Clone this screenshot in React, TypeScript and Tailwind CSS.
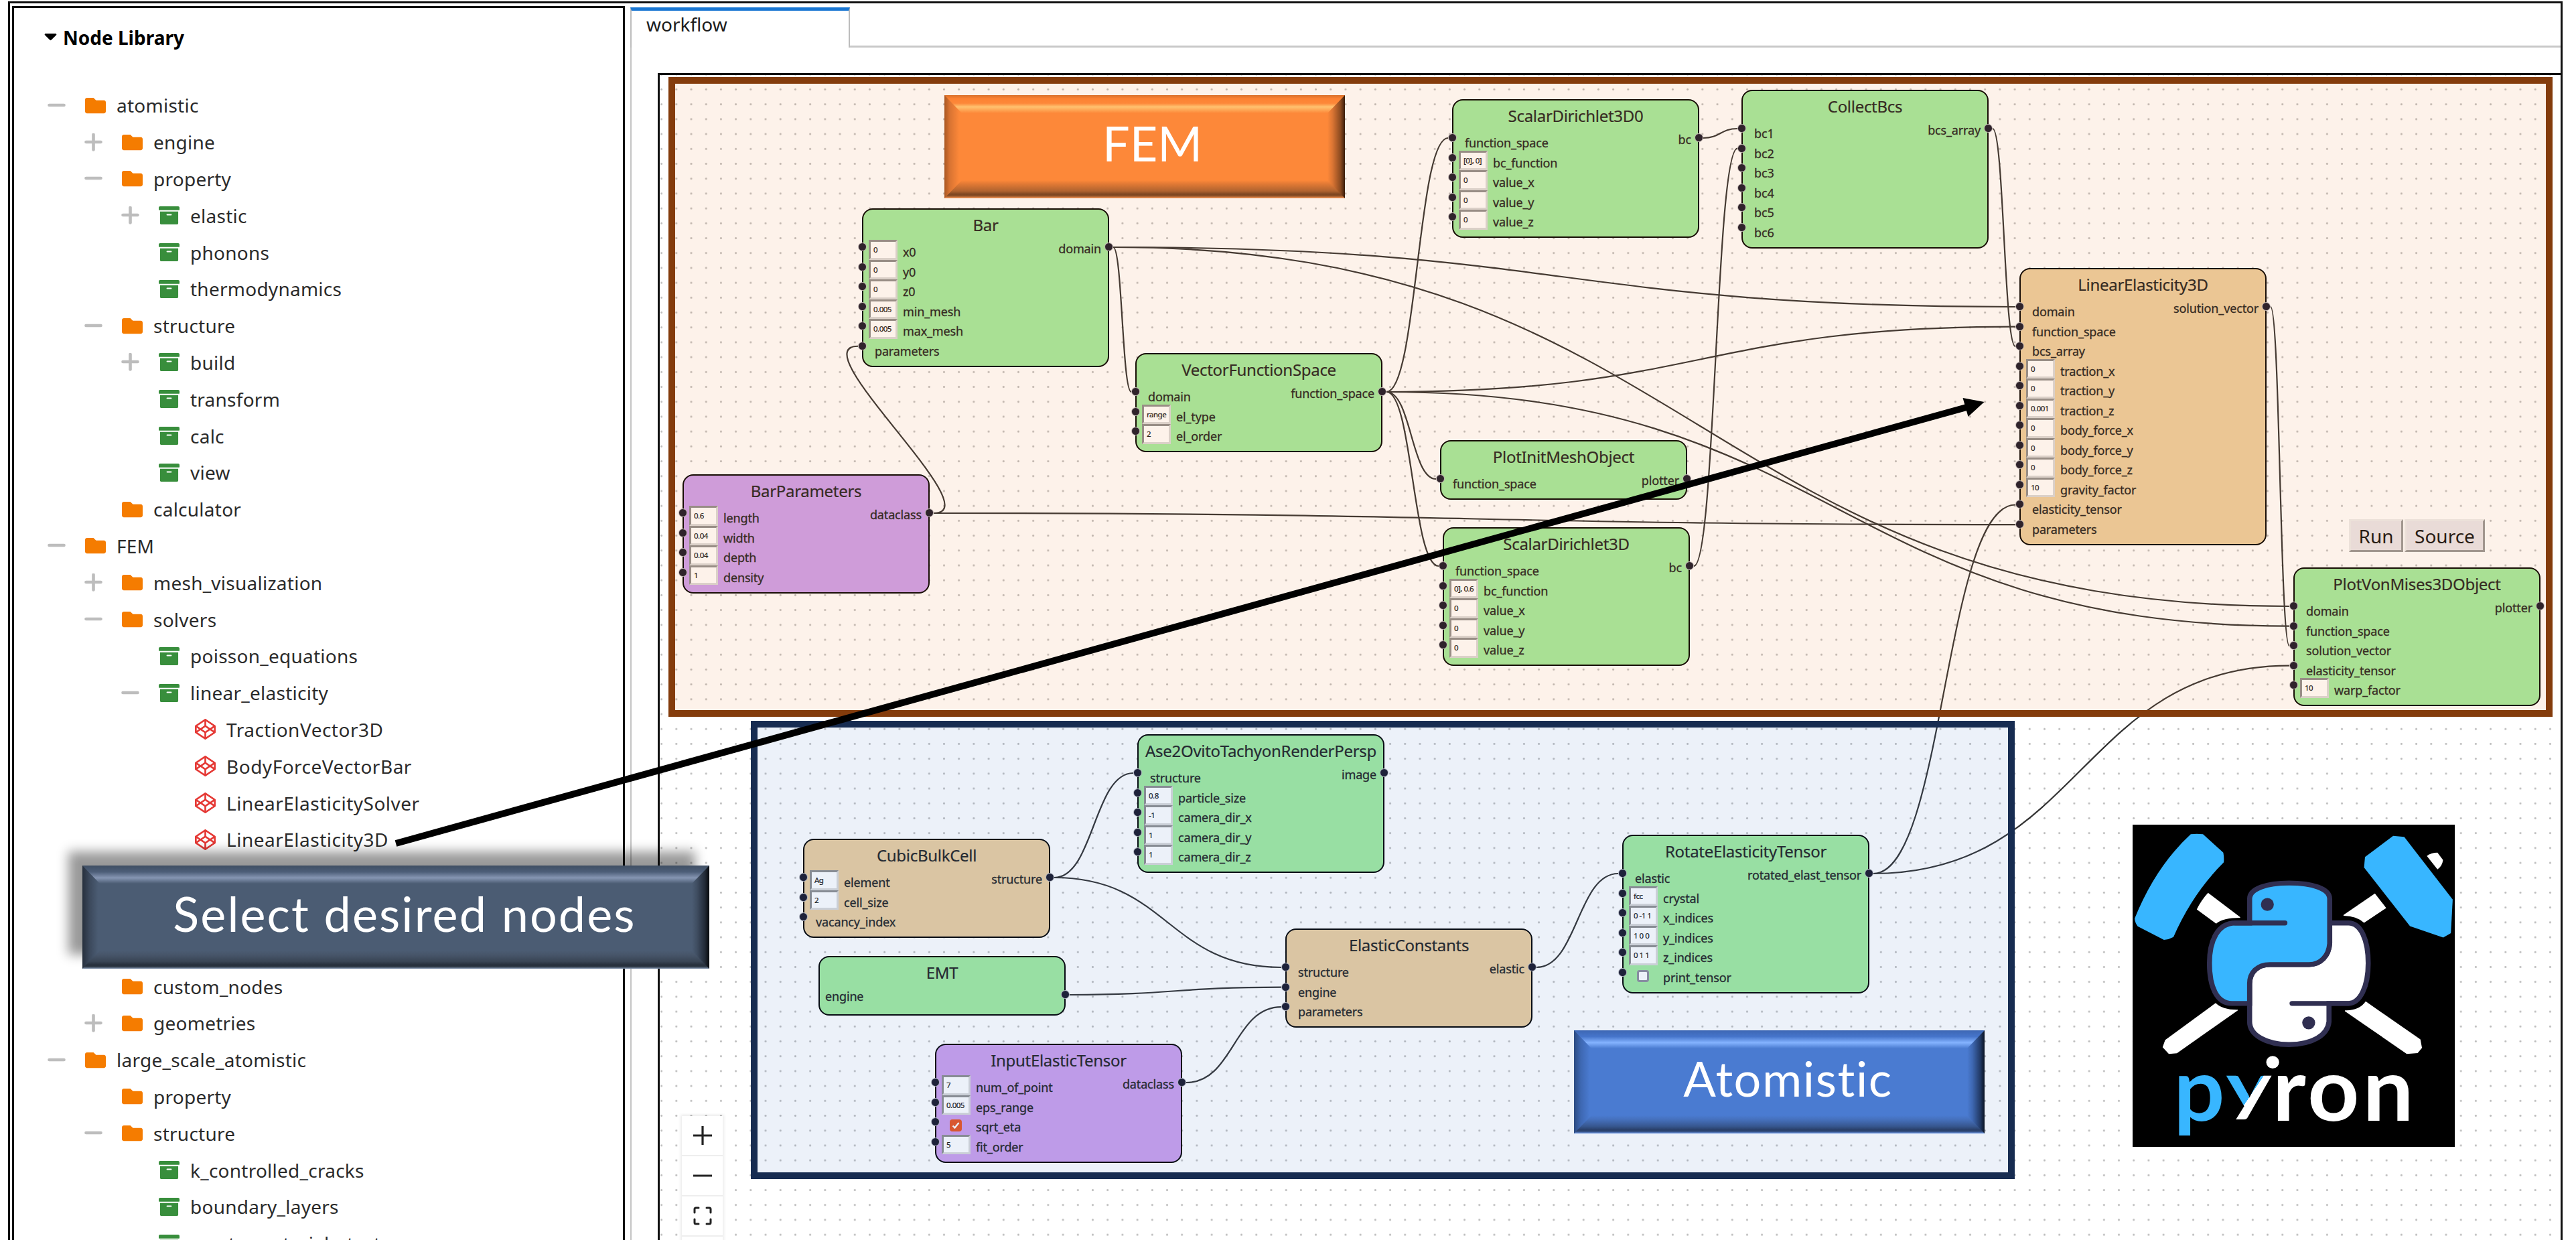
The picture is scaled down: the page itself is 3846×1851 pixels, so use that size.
import React from "react";
import { FaFolder, FaArchive, FaCodepen } from "react-icons/fa";

/* ---------- node library tree ---------- */

type Kind = "folder" | "archive" | "node";
type Toggle = "+" | "-" | "";
type TreeRow = [level: number, toggle: Toggle, kind: Kind, label: string];

const tree: TreeRow[] = [
  [0, "-", "folder", "atomistic"],
  [1, "+", "folder", "engine"],
  [1, "-", "folder", "property"],
  [2, "+", "archive", "elastic"],
  [2, "", "archive", "phonons"],
  [2, "", "archive", "thermodynamics"],
  [1, "-", "folder", "structure"],
  [2, "+", "archive", "build"],
  [2, "", "archive", "transform"],
  [2, "", "archive", "calc"],
  [2, "", "archive", "view"],
  [1, "", "folder", "calculator"],
  [0, "-", "folder", "FEM"],
  [1, "+", "folder", "mesh_visualization"],
  [1, "-", "folder", "solvers"],
  [2, "", "archive", "poisson_equations"],
  [2, "-", "archive", "linear_elasticity"],
  [3, "", "node", "TractionVector3D"],
  [3, "", "node", "BodyForceVectorBar"],
  [3, "", "node", "LinearElasticitySolver"],
  [3, "", "node", "LinearElasticity3D"],
  [3, "", "node", ""],
  [3, "", "node", ""],
  [3, "", "node", ""],
  [1, "", "folder", "custom_nodes"],
  [1, "+", "folder", "geometries"],
  [0, "-", "folder", "large_scale_atomistic"],
  [1, "", "folder", "property"],
  [1, "-", "folder", "structure"],
  [2, "", "archive", "k_controlled_cracks"],
  [2, "", "archive", "boundary_layers"],
  [2, "", "archive", "create_materials_test"],
];

const indent = ["pl-[50px]", "pl-[105px]", "pl-[160px]", "pl-[214px]"];

function ToggleIcon({ kind }: { kind: Toggle }) {
  return (
    <svg viewBox="0 0 27 27" className="h-[27px] w-[27px] shrink-0" stroke="#bdbdbd" strokeWidth="4.6" strokeLinecap="round">
      {kind !== "" && <path d="M2.5 13H24.5" />}
      {kind === "+" && <path d="M13.5 2V24.5" />}
    </svg>
  );
}

function TreeItem({ row }: { row: TreeRow }) {
  const [level, toggle, kind, label] = row;
  return (
    <div className={`flex h-[54.8px] items-center ${indent[level]}`}>
      <ToggleIcon kind={toggle} />
      <div className="ml-[28px] flex w-[32px] justify-center text-[31px]">
        {kind === "folder" && <FaFolder className="text-[#f57c00]" />}
        {kind === "archive" && <FaArchive className="text-[#388e3c]" />}
        {kind === "node" && <FaCodepen className="text-[#e53935]" />}
      </div>
      <span
        className={`ml-[16px] whitespace-nowrap text-[28px] leading-[54px] text-[#2b2b2b] ${
          kind === "node" ? "tracking-[0.5px]" : "tracking-[0.25px]"
        }`}
      >
        {label}
      </span>
    </div>
  );
}

/* ---------- workflow nodes ---------- */

type Row = { label: string; value?: string; check?: boolean; noPort?: boolean };
type NodeDef = {
  id: string;
  x: number;
  y: number;
  title: string;
  color: string;
  rows: Row[];
  out: string;
  outPlain?: boolean;
};

const GREEN = "bg-[#a2eba0]";
const LILAC = "bg-[#cca0ec]";
const SAND = "bg-[#ebcfa0]";

const WIDTH = 369;
const PITCH = 29.55;
const PORT = 58;

const nodes: NodeDef[] = [
  {
    id: "bar", x: 1287, y: 311, title: "Bar", color: GREEN, out: "domain",
    rows: [
      { label: "x0", value: "0" }, { label: "y0", value: "0" }, { label: "z0", value: "0" },
      { label: "min_mesh", value: "0.005" }, { label: "max_mesh", value: "0.005" }, { label: "parameters" },
    ],
  },
  {
    id: "barp", x: 1019, y: 708, title: "BarParameters", color: LILAC, out: "dataclass",
    rows: [
      { label: "length", value: "0.6" }, { label: "width", value: "0.04" },
      { label: "depth", value: "0.04" }, { label: "density", value: "1" },
    ],
  },
  {
    id: "vfs", x: 1695, y: 527, title: "VectorFunctionSpace", color: GREEN, out: "function_space",
    rows: [{ label: "domain" }, { label: "el_type", value: "range" }, { label: "el_order", value: "2" }],
  },
  {
    id: "sd0", x: 2168, y: 148, title: "ScalarDirichlet3D0", color: GREEN, out: "bc",
    rows: [
      { label: "function_space" }, { label: "bc_function", value: "[0], 0]" },
      { label: "value_x", value: "0" }, { label: "value_y", value: "0" }, { label: "value_z", value: "0" },
    ],
  },
  {
    id: "cbc", x: 2600, y: 134, title: "CollectBcs", color: GREEN, out: "bcs_array",
    rows: [{ label: "bc1" }, { label: "bc2" }, { label: "bc3" }, { label: "bc4" }, { label: "bc5" }, { label: "bc6" }],
  },
  {
    id: "pim", x: 2150, y: 657, title: "PlotInitMeshObject", color: GREEN, out: "plotter",
    rows: [{ label: "function_space" }],
  },
  {
    id: "sd", x: 2154, y: 787, title: "ScalarDirichlet3D", color: GREEN, out: "bc",
    rows: [
      { label: "function_space" }, { label: "bc_function", value: "0], 0.6" },
      { label: "value_x", value: "0" }, { label: "value_y", value: "0" }, { label: "value_z", value: "0" },
    ],
  },
  {
    id: "le", x: 3015, y: 400, title: "LinearElasticity3D", color: SAND, out: "solution_vector",
    rows: [
      { label: "domain" }, { label: "function_space" }, { label: "bcs_array" },
      { label: "traction_x", value: "0" }, { label: "traction_y", value: "0" }, { label: "traction_z", value: "0.001" },
      { label: "body_force_x", value: "0" }, { label: "body_force_y", value: "0" }, { label: "body_force_z", value: "0" },
      { label: "gravity_factor", value: "10" }, { label: "elasticity_tensor" }, { label: "parameters" },
    ],
  },
  {
    id: "pvm", x: 3424, y: 847, title: "PlotVonMises3DObject", color: GREEN, out: "plotter",
    rows: [
      { label: "domain" }, { label: "function_space" }, { label: "solution_vector" },
      { label: "elasticity_tensor" }, { label: "warp_factor", value: "10" },
    ],
  },
  {
    id: "ase", x: 1698, y: 1096, title: "Ase2OvitoTachyonRenderPersp", color: GREEN, out: "image",
    rows: [
      { label: "structure" }, { label: "particle_size", value: "0.8" },
      { label: "camera_dir_x", value: "-1" }, { label: "camera_dir_y", value: "1" }, { label: "camera_dir_z", value: "1" },
    ],
  },
  {
    id: "cub", x: 1199, y: 1252, title: "CubicBulkCell", color: SAND, out: "structure",
    rows: [{ label: "element", value: "Ag" }, { label: "cell_size", value: "2" }, { label: "vacancy_index" }],
  },
  { id: "emt", x: 1222, y: 1427, title: "EMT", color: GREEN, out: "engine", outPlain: true, rows: [] },
  {
    id: "iet", x: 1396, y: 1558, title: "InputElasticTensor", color: LILAC, out: "dataclass",
    rows: [
      { label: "num_of_point", value: "7" }, { label: "eps_range", value: "0.005" },
      { label: "sqrt_eta", check: true }, { label: "fit_order", value: "5" },
    ],
  },
  {
    id: "ec", x: 1919, y: 1386, title: "ElasticConstants", color: SAND, out: "elastic",
    rows: [{ label: "structure" }, { label: "engine" }, { label: "parameters" }],
  },
  {
    id: "ret", x: 2422, y: 1246, title: "RotateElasticityTensor", color: GREEN, out: "rotated_elast_tensor",
    rows: [
      { label: "elastic" }, { label: "crystal", value: "fcc" }, { label: "x_indices", value: "0 -1 1" },
      { label: "y_indices", value: "1 0 0" }, { label: "z_indices", value: "0 1 1" }, { label: "print_tensor", check: false },
    ],
  },
];

function Port({ side }: { side: "left" | "right" }) {
  return (
    <span
      className={`absolute top-[4px] h-[13px] w-[13px] rounded-full border-[1.5px] border-white/70 bg-[#1a192b] ${
        side === "left" ? "left-[-8px]" : "right-[-8px]"
      }`}
    />
  );
}

function NodeRow({ row }: { row: Row }) {
  const hasValue = row.value !== undefined;
  const hasCheck = row.check !== undefined;
  return (
    <div className="relative flex h-[29.55px]">
      <Port side="left" />
      {hasValue && (
        <div className="ml-[8px] mr-[8px] flex h-[29.55px] w-[43px] overflow-hidden border-[3px] border-t-[#8f8f8f] border-r-[#dadada] border-b-[#dadada] border-l-[#8f8f8f] bg-white pl-[4px]">
          <span className="whitespace-nowrap text-[11.5px] leading-[24px] tracking-[-0.5px] text-[#111] [-webkit-text-stroke:0.2px]">
            {row.value}
          </span>
        </div>
      )}
      {hasCheck && (
        <div className="ml-[20px] mr-[21px] pt-[7px]">
          {row.check ? (
            <div className="h-[18px] w-[18px] rounded-[4px] bg-[#e95420]">
              <svg viewBox="0 0 18 18" className="h-full w-full" fill="none" stroke="#fff" strokeWidth="2.4">
                <path d="M4.5 9.5L7.5 12.5L13.5 5" />
              </svg>
            </div>
          ) : (
            <div className="h-[18px] w-[18px] rounded-[4px] border-[3px] border-[#8f8f9d] bg-white" />
          )}
        </div>
      )}
      <span
        className={`whitespace-nowrap text-[18px] leading-[36px] tracking-[-0.15px] text-[#222] [-webkit-text-stroke:0.3px] ${
          hasValue || hasCheck ? "" : "ml-[17px]"
        }`}
      >
        {row.label}
      </span>
    </div>
  );
}

function WorkflowNode({ node }: { node: NodeDef }) {
  const count = Math.max(node.rows.length, 1);
  return (
    <div
      className={`absolute w-[369px] rounded-[16px] border-[2.5px] border-black ${node.color}`}
      style={{ left: node.x, top: node.y, height: 59.6 + PITCH * count }}
    >
      <div className="flex h-[45px] items-start justify-center whitespace-nowrap text-[24px] leading-[45px] tracking-[-0.3px] text-[#222] [-webkit-text-stroke:0.2px]">
        {node.title}
      </div>
      <div className="relative">
        {node.rows.map((r) => (
          <NodeRow key={r.label} row={r} />
        ))}
        <div className={`absolute inset-x-0 top-0 flex h-[29px] ${node.outPlain ? "justify-start pl-[8px]" : "justify-end pr-[10px]"}`}>
          <span className="pt-[3px] text-[18px] leading-[21px] tracking-[-0.15px] text-[#222] [-webkit-text-stroke:0.3px]">{node.out}</span>
          <Port side="right" />
        </div>
      </div>
    </div>
  );
}

/* ---------- edges ---------- */

const edges: [from: string, to: string, row: number][] = [
  ["bar", "vfs", 0],
  ["bar", "le", 0],
  ["bar", "pvm", 0],
  ["vfs", "sd0", 0],
  ["vfs", "le", 1],
  ["vfs", "pvm", 1],
  ["vfs", "pim", 0],
  ["vfs", "sd", 0],
  ["sd0", "cbc", 0],
  ["sd", "cbc", 1],
  ["cbc", "le", 2],
  ["le", "pvm", 2],
  ["barp", "bar", 5],
  ["barp", "le", 11],
  ["ret", "le", 10],
  ["ret", "pvm", 3],
  ["cub", "ase", 0],
  ["cub", "ec", 0],
  ["emt", "ec", 1],
  ["iet", "ec", 2],
  ["ec", "ret", 0],
];

function edgePath(from: string, to: string, row: number) {
  const s = nodes.find((n) => n.id === from)!;
  const t = nodes.find((n) => n.id === to)!;
  const sx = s.x + WIDTH + 6;
  const sy = s.y + PORT;
  const tx = t.x - 6;
  const ty = t.y + PORT + row * PITCH;
  const dx = tx - sx;
  const c = dx >= 0 ? dx / 2 : 8.15 * Math.sqrt(-dx);
  return `M${sx} ${sy}C${sx + c} ${sy} ${tx - c} ${ty} ${tx} ${ty}`;
}

/* ---------- banners ---------- */

function Banner({ tone, className, children }: { tone: "orange" | "blue" | "slate"; className: string; children: React.ReactNode }) {
  const tones = {
    orange: {
      base: "bg-[#fd8839]",
      top: "bg-[linear-gradient(#d9702b,#fd8232_20%,#fd8839_45%,#ffc270_65%,#fd8839)]",
      bottom: "bg-[linear-gradient(#fd8839,#e27a35_20%,#b0632f_60%,#7d4621_78%,#8a4d24_86%,#fd9a58)]",
      left: "bg-[linear-gradient(90deg,#a85621,#d87332_30%,#fd8839_85%)]",
      right: "bg-[linear-gradient(270deg,#3a1d0a,#8a4a20_25%,#d97433_70%,#fd8839)]",
    },
    blue: {
      base: "bg-[#4a7bd1]",
      top: "bg-[linear-gradient(#3d67b3,#4675cb_35%,#84b3ff_68%,#4a7bd1)]",
      bottom: "bg-[linear-gradient(#4a7bd1,#456fba_25%,#37578f_60%,#293f69_80%,#2d4573_88%,#6f9cec)]",
      left: "bg-[linear-gradient(90deg,#2b4a80,#3e68b3_40%,#4a7bd1_90%)]",
      right: "bg-[linear-gradient(270deg,#0a1222,#223a66_25%,#3e68b3_70%,#4a7bd1)]",
    },
    slate: {
      base: "bg-[#4b5c73]",
      top: "bg-[linear-gradient(#3f4e63,#4d5e78_35%,#8696b3_68%,#4b5c73)]",
      bottom: "bg-[linear-gradient(#4b5c73,#475569_25%,#394555_60%,#262f3b_80%,#2c3643_88%,#7f92ad)]",
      left: "bg-[linear-gradient(90deg,#27303d,#3b485b_40%,#4b5c73_90%)]",
      right: "bg-[linear-gradient(270deg,#07090c,#222a36_25%,#3f4d61_70%,#4b5c73)]",
    },
  }[tone];
  return (
    <div className={`absolute h-[154px] ${tones.base} ${className}`}>
      <div className={`absolute inset-y-0 left-0 w-[26px] ${tones.left}`} />
      <div className={`absolute inset-y-0 right-0 w-[26px] ${tones.right}`} />
      <div className={`absolute inset-x-0 top-0 h-[27px] [clip-path:polygon(0_0,100%_0,calc(100%-26px)_100%,26px_100%)] ${tones.top}`} />
      <div className={`absolute inset-x-0 bottom-0 h-[27px] [clip-path:polygon(26px_0,calc(100%-26px)_0,100%_100%,0_100%)] ${tones.bottom}`} />
      <div className="relative flex h-full justify-center whitespace-nowrap font-[Lato,sans-serif] text-[72px] leading-[142px] text-white">
        {children}
      </div>
    </div>
  );
}

/* ---------- logo ---------- */

function PyironLogo() {
  return (
    <svg viewBox="70 63 1396 1442" preserveAspectRatio="none" className="absolute left-[3184px] top-[1231px] h-[481px] w-[481px] bg-black">
      <defs>
        <linearGradient id="yFill" gradientUnits="userSpaceOnUse" x1="82" y1="-69" x2="118" y2="-51">
          <stop offset="0.5" stopColor="#38b6ff" />
          <stop offset="0.5" stopColor="#fff" />
        </linearGradient>
      </defs>
      {/* hammers */}
      <g fill="#38b6ff">
        <path d="M322 106Q348 102 375 106L463 188Q467 210 465 232Q330 370 247 566Q228 577 206 579L92 518Q80 502 79 483Q170 250 322 106Z" />
        <path d="M1199 113L1247 118L1457 398L1449 549L1416 568L1272 517L1073 255L1077 208Z" />
      </g>
      <g fill="#fff">
        <path d="M397 368L536 477V480Q460 480 432 506L348 442Q368 400 397 368Z" />
        <path d="M1120 371L1169 436L1073 502Q1040 472 984 471V467Z" />
        <path d="M1345 203Q1364 188 1391 188L1415 221Q1412 248 1391 263Z" />
        <path d="M430 861Q460 892 526 891V894L262 1086L227 1089L200 1059L211 1027Z" />
        <path d="M1080 854L1317 1024L1324 1062L1305 1085L1258 1089L990 898V894Q1052 896 1080 854Z" />
      </g>
      {/* intertwined snakes */}
      <g stroke="#302f51" strokeWidth="22" strokeLinecap="round">
        <path
          fill="#fff"
          d="M924 503H1005C1060 503 1091 580 1091 683C1091 790 1055 863 1005 863H921V945C915 1005 850 1047 748 1047C650 1047 577 1005 577 945V775C577 725 610 689 665 689H835C885 689 920 650 924 595Z"
        />
        <path
          fill="#38b6ff"
          d="M577 503V395C577 350 650 324 748 324C850 324 924 350 924 395V595C920 650 885 689 835 689H665C610 689 577 725 577 775V863H500C435 863 403 790 403 683C403 580 440 503 515 503Z"
        />
        <path fill="none" d="M515 503H730M761 863H1005" />
      </g>
      <g fill="#302f51">
        <ellipse cx="654" cy="420" rx="28" ry="29" />
        <ellipse cx="833" cy="950" rx="28" ry="29" />
      </g>
      {/* wordmark */}
      <g className="font-[Lato,sans-serif] font-bold" fontSize="390" fill="#fff">
        <text x="248" y="1387" fill="#38b6ff">p</text>
        <text transform="translate(475 1333) scale(0.96 0.73)" fill="url(#yFill)">y</text>
        <text x="676" y="1387">r</text>
        <text x="828" y="1387">o</text>
        <text x="1068" y="1387">n</text>
      </g>
      <ellipse cx="677" cy="1126" rx="28" ry="28" fill="#fff" />
    </svg>
  );
}

/* ---------- page ---------- */

export default function App() {
  return (
    <div className="relative h-[1851px] w-[3846px] overflow-hidden bg-white pl-[12px] pt-[2px] font-['Noto_Sans',sans-serif]">
      <div className="flex h-[1860px] w-[3814px] border-[3px] border-[#111] pl-[3px]">
        <aside className="mt-[4px] h-[1860px] w-[915px] shrink-0 overflow-hidden border-[3px] border-[#111]">
          <div className="flex h-[87px] items-center gap-[9px] pl-[45px]">
            <svg viewBox="0 0 20 11" className="h-[11px] w-[19px]">
              <path d="M1.5 0H18.5Q20 1 19 2L11 10Q10 11 9 10L1 2Q0 1 1.5 0Z" fill="#000" />
            </svg>
            <h1 className="text-[28px] font-bold text-black">Node Library</h1>
          </div>
          <div className="pt-[31px]">
            {tree.map((row, i) => (
              <TreeItem key={i} row={row} />
            ))}
          </div>
        </aside>

        <main className="flex min-w-0 flex-1 flex-col pl-[8px] pt-[6px]">
          <div className="flex h-[60px]">
            <div className="w-[328px] border-l-2 border-r-2 border-t-[5px] border-[#bdbdbd] border-t-[#1976d2] pl-[22px] text-[28px] leading-[41px] text-[#1c1c1c]">
              workflow
            </div>
            <div className="flex-1 border-b-[3px] border-[#c8c8c8]" />
          </div>
          <div className="flex-1 border-l-2 border-[#c4c4c4] pl-[39px] pt-[38px]">
            <div className="h-full border-l-[3px] border-t-[3px] border-[#111] bg-[radial-gradient(circle,#bdbdbd_1px,transparent_2px)] bg-size-[22.217px_22.217px] bg-position-[-8.5px_10.4px]" />
          </div>
        </main>
      </div>

      {/* workflow canvas contents */}
      <svg className="absolute left-0 top-0 h-[1851px] w-[3846px]" fill="none" stroke="#333" strokeWidth="2.2">
        {edges.map(([from, to, row]) => (
          <path key={`${from}-${to}-${row}`} d={edgePath(from, to, row)} />
        ))}
      </svg>
      {nodes.map((n) => (
        <WorkflowNode key={n.id} node={n} />
      ))}

      <div className="absolute left-[3507px] top-[775px] flex gap-[2px] text-[28px] text-[#111]">
        <button className="h-[49px] w-[81px] border-[3px] border-t-[#ececec] border-r-[#999] border-b-[#999] border-l-[#ececec] bg-[#e9e6ea] leading-[40px]">
          Run
        </button>
        <button className="h-[49px] w-[120px] border-[3px] border-t-[#ececec] border-r-[#999] border-b-[#999] border-l-[#ececec] bg-[#e9e6ea] leading-[40px]">
          Source
        </button>
      </div>

      <div className="absolute left-[1018px] top-[1666px] flex w-[61px] flex-col divide-y-2 divide-[#eee] bg-white shadow-[0_0_4px_2px_rgba(0,0,0,0.08)]">
        <div className="flex h-[60px] items-center justify-center">
          <svg viewBox="0 0 28 28" className="h-[28px] w-[28px]" stroke="#222" strokeWidth="3.2"><path d="M0 14H28M14 0V28" /></svg>
        </div>
        <div className="flex h-[60px] items-center justify-center">
          <svg viewBox="0 0 28 28" className="h-[28px] w-[28px]" stroke="#222" strokeWidth="3"><path d="M0 14H28" /></svg>
        </div>
        <div className="flex h-[60px] items-center justify-center">
          <svg viewBox="0 0 28 28" className="h-[28px] w-[28px]" fill="none" stroke="#222" strokeWidth="3" strokeLinecap="round">
            <path d="M2 9V4Q2 2 4 2H8M20 2H24Q26 2 26 4V9M26 19V24Q26 26 24 26H20M8 26H4Q2 26 2 24V19" />
          </svg>
        </div>
        <div className="h-[60px]" />
      </div>

      {/* region highlights */}
      <div className="absolute left-[1121px] top-[1076px] h-[684px] w-[1887px] border-[10px] border-[#172c51] bg-[#4472c4]/10" />
      <div className="absolute left-[998px] top-[115px] h-[955px] w-[2813px] border-[10px] border-[#843c0c] bg-[#ed7d31]/10" />

      <Banner tone="orange" className="left-[1410px] top-[142px] w-[598px] pl-[23px]">FEM</Banner>
      <Banner tone="blue" className="left-[2350px] top-[1538px] w-[613px] pl-[26px] tracking-[1.6px]">Atomistic</Banner>

      <PyironLogo />

      <svg className="absolute left-0 top-0 h-[1851px] w-[3846px]">
        <path d="M591 1259L2936 608" stroke="#000" strokeWidth="10" />
        <path d="M2930.5 594L2962.5 600L2938.5 622Z" fill="#000" />
      </svg>

      <Banner tone="slate" className="left-[123px] top-[1292px] w-[936px] pl-[26px] tracking-[2.1px] shadow-[-21px_-21px_16px_rgba(0,0,0,0.4)]">
        Select desired nodes
      </Banner>
    </div>
  );
}
